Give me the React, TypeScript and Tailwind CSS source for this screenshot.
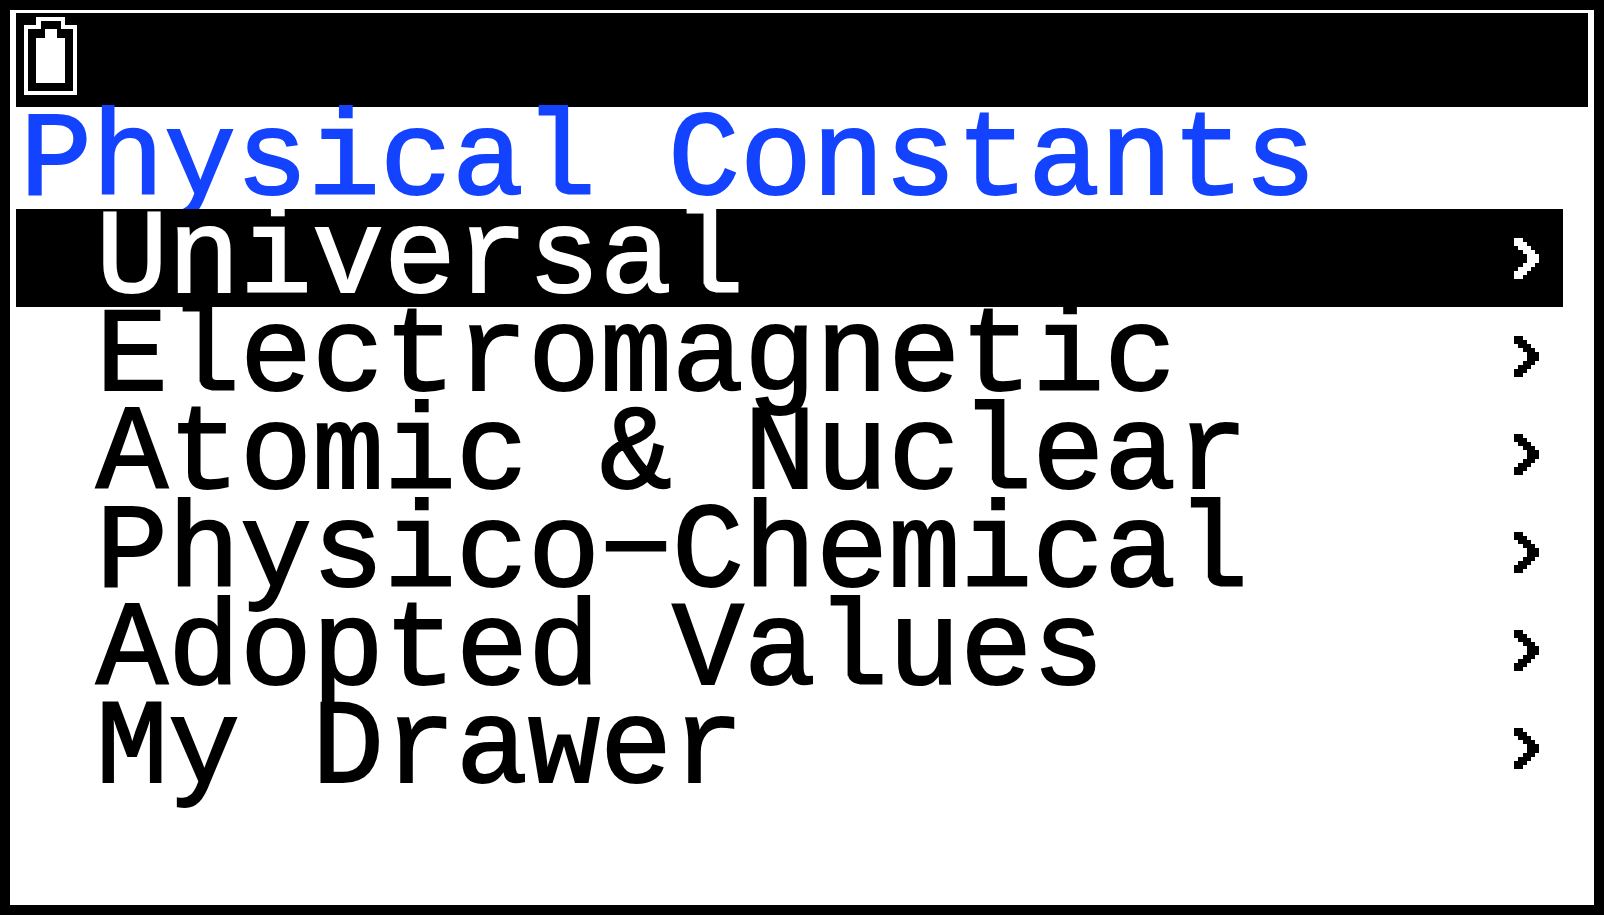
import React, { useState } from "react";

const categories: string[] = [
  "Universal",
  "Electromagnetic",
  "Atomic & Nuclear",
  "Physico−Chemical",
  "Adopted Values",
  "My Drawer",
];

function Battery() {
  return (
    <svg
      role="img"
      aria-label="Battery full"
      width="53"
      height="78"
      viewBox="0 0 53 78"
      shapeRendering="crispEdges"
      fill="#fff"
    >
      <path
        fillRule="evenodd"
        d="M12 0H41V8H53V78H0V8H12ZM17 4V12H4V74H49V12H37V4Z"
      />
      <path d="M21 12H33V21H41V66H12V21H21Z" />
    </svg>
  );
}

function Chevron() {
  return (
    <svg
      aria-hidden="true"
      width="25"
      height="41"
      viewBox="0 0 25 41"
      shapeRendering="crispEdges"
      fill="currentColor"
      className="shrink-0"
    >
      <path d="M0 0H9V4H13V8H17V12H21V16H25V25H21V29H17V33H13V37H9V41H0V33H4V29H9V25H13V16H9V12H4V8H0Z" />
    </svg>
  );
}

export default function App() {
  const [selected, setSelected] = useState(0);

  return (
    <main className="flex min-h-screen flex-col border-10 border-black bg-white pt-[3px] pr-[6px] pl-[6px] font-['Liberation_Mono',monospace] text-[120px] leading-[94px] text-black [-webkit-text-stroke:2px_currentColor]">
      <header className="flex h-[94px] shrink-0 items-start bg-black px-2 pt-1">
        <Battery />
      </header>
      <h1 className="pt-2 pl-1 whitespace-pre text-[#1443ff]">Physical Constants</h1>
      <ul className="mr-[25px]">
        {categories.map((name, index) => (
          <li key={name}>
            <button
              type="button"
              onClick={() => setSelected(index)}
              aria-current={index === selected}
              className={
                index === selected
                  ? "flex w-full items-center justify-between bg-black pr-6 pl-20 text-left whitespace-pre text-white outline-none"
                  : "flex w-full items-center justify-between pr-6 pl-20 text-left whitespace-pre text-black outline-none"
              }
            >
              <span className="pt-1">{name}</span>
              <Chevron />
            </button>
          </li>
        ))}
      </ul>
    </main>
  );
}
